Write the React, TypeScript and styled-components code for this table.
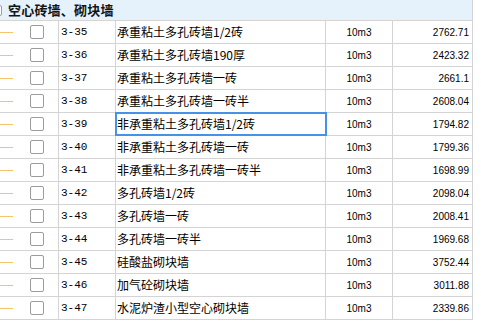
import React from 'react';
import styled, { createGlobalStyle } from 'styled-components';

const GlobalStyle = createGlobalStyle`
  html, body {
    margin: 0;
    padding: 0;
    background: #ffffff;
  }
  body {
    font-family: "Noto Sans CJK SC", "Liberation Sans", sans-serif;
    font-size: 12px;
    color: #000;
  }
`;

const Table = styled.div`
  width: 473px;
  border-right: 1px solid #d4d4d4;
  box-sizing: border-box;
`;

const GroupHeader = styled.div`
  height: 21px;
  display: flex;
  align-items: center;
  gap: 6px;
  background: #e5f2fc;
  border-bottom: 1px solid #d4d4d4;
  box-sizing: border-box;
  overflow: hidden;
`;

const GroupTitle = styled.span`
  font-size: 13px;
  font-weight: bold;
  color: #141414;
  letter-spacing: 0.2px;
  line-height: 20px;
`;

const Box = styled.span<{ $clip?: boolean }>`
  display: inline-block;
  flex: none;
  width: ${(p) => (p.$clip ? 12 : 14)}px;
  height: ${(p) => (p.$clip ? 11 : 14)}px;
  margin-left: ${(p) => (p.$clip ? -10 : 0)}px;
  border: 1px solid #9c9c9c;
  border-radius: 2px;
  background: #fff;
  box-sizing: border-box;
`;

const Row = styled.div`
  height: 23px;
  display: flex;
  border-bottom: 1px solid #d4d4d4;
  box-sizing: border-box;
`;

const Cell = styled.div<{ $w: number; $align?: 'left' | 'center' | 'right'; $selected?: boolean }>`
  position: relative;
  width: ${(p) => p.$w}px;
  flex: none;
  display: flex;
  align-items: center;
  justify-content: ${(p) =>
    p.$align === 'right' ? 'flex-end' : p.$align === 'center' ? 'center' : 'flex-start'};
  border-right: 1px solid #d4d4d4;
  box-sizing: border-box;
  white-space: nowrap;
  overflow: visible;

  &:last-child {
    border-right: none;
  }

  ${(p) =>
    p.$selected &&
    `
    &::after {
      content: '';
      position: absolute;
      top: -1px;
      left: -1px;
      right: -2px;
      bottom: -1px;
      border: 2px solid #4592e6;
      pointer-events: none;
    }
  `}
`;

const TreeCell = styled(Cell)`
  gap: 17px;
`;

const Dash = styled.span`
  width: 13px;
  height: 1px;
  background: #f7c46e;
  flex: none;
`;

const Code = styled.span`
  font-family: "Liberation Mono", monospace;
  font-size: 11px;
  padding-left: 2px;
`;

const Name = styled.span`
  font-family: "Noto Sans CJK SC", "Liberation Sans", sans-serif;
  font-size: 12px;
  padding-left: 1px;
  line-height: 16px;
`;

const Narrow = styled.span<{ $pad?: number }>`
  font-family: "Liberation Sans Narrow", "Liberation Sans", sans-serif;
  font-size: 10px;
  padding-right: ${(p) => p.$pad ?? 0}px;
`;

const rows = [
  ['3-35', '承重粘土多孔砖墙1/2砖', '2762.71'],
  ['3-36', '承重粘土多孔砖墙190厚', '2423.32'],
  ['3-37', '承重粘土多孔砖墙一砖', '2661.1'],
  ['3-38', '承重粘土多孔砖墙一砖半', '2608.04'],
  ['3-39', '非承重粘土多孔砖墙1/2砖', '1794.82'],
  ['3-40', '非承重粘土多孔砖墙一砖', '1799.36'],
  ['3-41', '非承重粘土多孔砖墙一砖半', '1698.99'],
  ['3-42', '多孔砖墙1/2砖', '2098.04'],
  ['3-43', '多孔砖墙一砖', '2008.41'],
  ['3-44', '多孔砖墙一砖半', '1969.68'],
  ['3-45', '硅酸盐砌块墙', '3752.44'],
  ['3-46', '加气砼砌块墙', '3011.88'],
  ['3-47', '水泥炉渣小型空心砌块墙', '2339.86'],
];

const App = () => {
  return (
    <>
      <GlobalStyle />
      <Table>
        <GroupHeader>
          <Box $clip />
          <GroupTitle>空心砖墙、砌块墙</GroupTitle>
        </GroupHeader>
        {rows.map(([code, name, price]) => (
          <Row key={code}>
            <TreeCell $w={59}>
              <Dash />
              <Box />
            </TreeCell>
            <Cell $w={57}>
              <Code>{code}</Code>
            </Cell>
            <Cell $w={210} $selected={code === '3-39'}>
              <Name>{name}</Name>
            </Cell>
            <Cell $w={67} $align="center">
              <Narrow>10m3</Narrow>
            </Cell>
            <Cell $w={80} $align="right">
              <Narrow $pad={4}>{price}</Narrow>
            </Cell>
          </Row>
        ))}
      </Table>
    </>
  );
};

export default App;
